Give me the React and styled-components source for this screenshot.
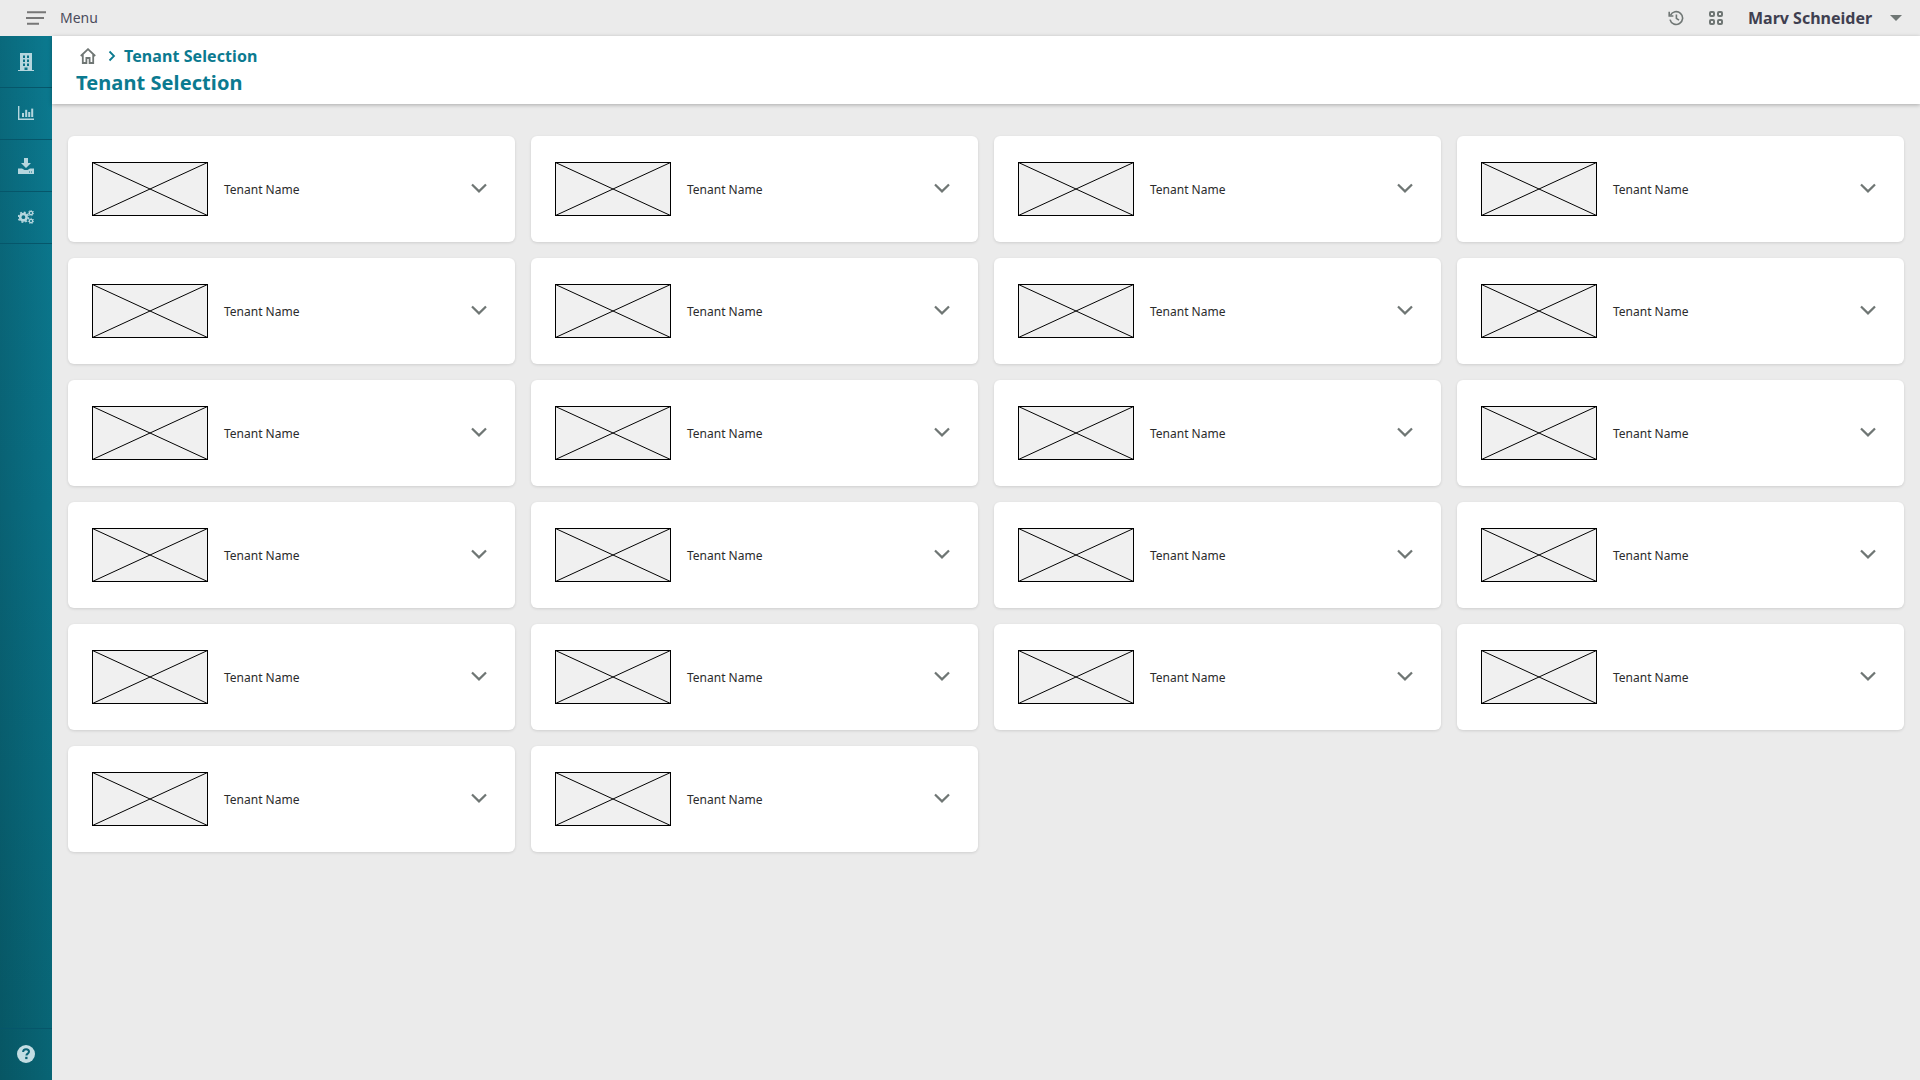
import React from 'react';
import styled, { createGlobalStyle } from 'styled-components';

const Global = createGlobalStyle`
  html, body { margin: 0; padding: 0; height: 100%; }
  body { background: #ebebeb; font-family: "Noto Sans", "Open Sans", sans-serif; }
  #root { height: 100%; }
  * { box-sizing: border-box; }
`;

const Page = styled.div`
  width: 1920px; height: 1080px; display: flex; flex-direction: column; overflow: hidden; background: #ebebeb;
`;
const TopBar = styled.header`
  height: 36px; flex: none; display: flex; align-items: center; justify-content: space-between;
  padding: 0 18px 0 26px; background: #ebebeb;
`;
const BarGroup = styled.div`display: flex; align-items: center;`;
const MenuLabel = styled.span`
  margin-left: 14px; font-size: 14px; line-height: 18px; color: #4b4b5c;
`;
const UserName = styled.span`
  margin-left: 25px; font-size: 16px; line-height: 20px; font-weight: 700; color: #3f3f50; width: 126px; white-space: nowrap;
`;
const Caret = styled.span`
  margin-left: 16px; width: 0; height: 0; border-left: 6px solid transparent; border-right: 6px solid transparent; border-top: 6px solid #6f7674;
`;
const IconSlot = styled.span`
  display: flex; width: ${p => p.$w || 16}px; margin-left: ${p => p.$ml || 0}px; color: #6f7674;
`;
const Body = styled.div`flex: 1; display: flex; min-height: 0;`;
const Rail = styled.nav`
  width: 52px; flex: none; display: flex; flex-direction: column; justify-content: space-between;
  background:
    linear-gradient(90deg, rgba(0,0,0,.14) 0%, rgba(0,0,0,0) 100%),
    linear-gradient(180deg, #0b7a90 0%, #0a7186 45%, #086474 100%);
  color: #b5d6de;
`;
const RailGroup = styled.div`display: flex; flex-direction: column;`;
const RailItem = styled.div`
  height: 52px; display: flex; align-items: center; justify-content: center;
  border-bottom: 1px solid #06566a;
`;
const HelpItem = styled(RailItem)`
  border-bottom: 0; border-top: 1px solid #06566a; padding-bottom: 2px;
`;
const Main = styled.main`flex: 1; display: flex; flex-direction: column; min-width: 0;`;
const Header = styled.div`
  height: 68px; flex: none; background: #fff; padding: 9px 0 0 24px; box-shadow: 0 1px 4px rgba(0,0,0,.28); position: relative;
`;
const Crumbs = styled.div`display: flex; align-items: center; height: 22px; color: #0b7a90;`;
const CrumbText = styled.span`
  margin-left: 8px; font-size: 16px; line-height: 22px; font-weight: 700; letter-spacing: .08px; color: #0b7a90;
`;
const Title = styled.h1`
  margin: 2px 0 0; font-size: 20px; line-height: 28px; font-weight: 700; letter-spacing: .08px; color: #0b7a90;
`;
const Grid = styled.section`
  display: grid; grid-template-columns: repeat(4, 447px); gap: 16px; padding: 32px 0 0 16px;
`;
const Card = styled.article`
  height: 106px; display: flex; align-items: center; padding: 0 24px; background: #fff; border-radius: 6px;
  box-shadow: 0 1px 3px rgba(0,0,0,.12);
`;
const Placeholder = styled.svg`width: 116px; height: 54px; flex: none; display: block;`;
const Name = styled.span`
  flex: 1; margin-left: 16px; font-size: 12px; line-height: 16px; color: #2b2b2b; position: relative; top: 1px;
`;
const Chevron = styled.svg`width: 16px; height: 10px; flex: none; margin-right: 4px; position: relative; top: -1px;`;
const ChartGlyph = styled.svg`margin-top: -2px;`;
const GearsGlyph = styled.svg`margin-top: -1px;`;

const Image = () => (
  <Placeholder viewBox="0 0 116 54">
    <rect x="0.5" y="0.5" width="115" height="53" fill="#f0f0f0" stroke="#000" />
    <path d="M0.5 0.5L115.5 53.5M115.5 0.5L0.5 53.5" stroke="#000" strokeWidth="1" fill="none" />
  </Placeholder>
);

const TenantCard = () => (
  <Card>
    <Image />
    <Name>Tenant Name</Name>
    <Chevron viewBox="0 0 16 10">
      <path d="M1 1.5L8 8.4L15 1.5" fill="none" stroke="#6f7674" strokeWidth="2.2" />
    </Chevron>
  </Card>
);

const HamburgerIcon = () => (
  <IconSlot $w={20}>
    <svg width="20" height="14" viewBox="0 0 20 14">
      <path d="M1 1.2H20M0 7H18M1 12.8H13" stroke="#777" strokeWidth="1.9" fill="none" />
    </svg>
  </IconSlot>
);
const HistoryIcon = () => (
  <IconSlot $w={16}>
    <svg width="16" height="16" viewBox="0 0 16 16" fill="none" stroke="currentColor" strokeWidth="1.6">
      <path d="M2.4 5.4A6.4 6.4 0 1 1 2 9.6" />
      <path d="M1.2 1.8V6H5.4" fill="none" />
      <path d="M8.4 4.6V8.4L11 10.2" />
    </svg>
  </IconSlot>
);
const GridIcon = () => (
  <IconSlot $w={14} $ml={25}>
    <svg width="14" height="14" viewBox="0 0 14 14" fill="none" stroke="currentColor" strokeWidth="2">
      <rect x="1" y="1" width="4" height="4" rx="1" />
      <rect x="9" y="1" width="4" height="4" rx="1" />
      <rect x="1" y="9" width="4" height="4" rx="1" />
      <rect x="9" y="9" width="4" height="4" rx="1" />
    </svg>
  </IconSlot>
);
const BuildingIcon = () => (
  <svg width="16" height="18" viewBox="0 0 16 18" fill="currentColor">
    <path fillRule="evenodd" d="M2 0H14V17H16V18H0V17H2ZM5 2.5V5H7V2.5ZM9 2.5V5H11V2.5ZM5 6.5V9H7V6.5ZM9 6.5V9H11V6.5ZM5 10.5V13H7V10.5ZM9 10.5V13H11V10.5ZM6.5 14.5V17H9.5V14.5Z" />
  </svg>
);
const ChartIcon = () => (
  <ChartGlyph width="16" height="14" viewBox="0 0 16 14" fill="currentColor">
    <path d="M0 0H1.4V12.4H16V14H0Z" />
    <rect x="4" y="7" width="2" height="4" />
    <rect x="7.2" y="3.8" width="2" height="7.2" />
    <rect x="10.2" y="6" width="2" height="5" />
    <rect x="13.2" y="2.6" width="2" height="8.4" />
  </ChartGlyph>
);
const DownloadIcon = () => (
  <svg width="16" height="16" viewBox="0 0 16 16" fill="currentColor">
    <path d="M6 0H10V5H13L8 10L3 5H6Z" />
    <path fillRule="evenodd" d="M0 10.5H4L6.5 12H9.5L12 10.5H16V16H0ZM11 13.4V14.4H12V13.4ZM13 13.4V14.4H14V13.4Z" />
  </svg>
);
const GearsIcon = () => (
  <GearsGlyph width="16" height="14" viewBox="0 0 16 14">
    <circle cx="5.4" cy="7.2" r="3.2" fill="none" stroke="currentColor" strokeWidth="2.6" />
    <circle cx="5.4" cy="7.2" r="5" fill="none" stroke="currentColor" strokeWidth="1.6" strokeDasharray="1.9 2" />
    <circle cx="13" cy="3" r="1.7" fill="none" stroke="currentColor" strokeWidth="1.3" />
    <circle cx="13" cy="3" r="2.7" fill="none" stroke="currentColor" strokeWidth="1" strokeDasharray="1.2 1.2" />
    <circle cx="13" cy="11" r="1.7" fill="none" stroke="currentColor" strokeWidth="1.3" />
    <circle cx="13" cy="11" r="2.7" fill="none" stroke="currentColor" strokeWidth="1" strokeDasharray="1.2 1.2" />
  </GearsGlyph>
);
const HelpIcon = () => (
  <svg width="18" height="18" viewBox="0 0 18 18">
    <circle cx="9" cy="9" r="9" fill="#c3dde3" />
    <path d="M6.1 7C6.1 5.2 7.4 4.2 9.1 4.2C10.8 4.2 12 5.2 12 6.7C12 8.5 9.4 8.7 9.4 10.6" fill="none" stroke="#0a6275" strokeWidth="2" />
    <rect x="8.2" y="11.8" width="2.3" height="2.3" fill="#0a6275" />
  </svg>
);
const HomeIcon = () => (
  <svg width="16" height="16" viewBox="0 0 16 16" fill="none" stroke="#6f7674" strokeWidth="1.8">
    <path d="M0.8 8L8 1.2L15.2 8" />
    <path d="M2.8 6.4V15H6.4V10H9.6V15H13.2V6.4" />
  </svg>
);
const CrumbChevron = styled.svg`margin-left: 12px; flex: none;`;

export default function App() {
  return (
    <Page>
      <Global />
      <TopBar>
        <BarGroup>
          <HamburgerIcon />
          <MenuLabel>Menu</MenuLabel>
        </BarGroup>
        <BarGroup>
          <HistoryIcon />
          <GridIcon />
          <UserName>Marv Schneider</UserName>
          <Caret />
        </BarGroup>
      </TopBar>
      <Body>
        <Rail>
          <RailGroup>
            <RailItem><BuildingIcon /></RailItem>
            <RailItem><ChartIcon /></RailItem>
            <RailItem><DownloadIcon /></RailItem>
            <RailItem><GearsIcon /></RailItem>
          </RailGroup>
          <HelpItem><HelpIcon /></HelpItem>
        </Rail>
        <Main>
          <Header>
            <Crumbs>
              <IconSlot $w={16} $ml={4}><HomeIcon /></IconSlot>
              <CrumbChevron width="8" height="12" viewBox="0 0 8 12">
                <path d="M1.5 1.5L6 6L1.5 10.5" fill="none" stroke="#0b7a90" strokeWidth="1.8" />
              </CrumbChevron>
              <CrumbText>Tenant Selection</CrumbText>
            </Crumbs>
            <Title>Tenant Selection</Title>
          </Header>
          <Grid>
            {Array.from({ length: 22 }, (_, i) => <TenantCard key={i} />)}
          </Grid>
        </Main>
      </Body>
    </Page>
  );
}
